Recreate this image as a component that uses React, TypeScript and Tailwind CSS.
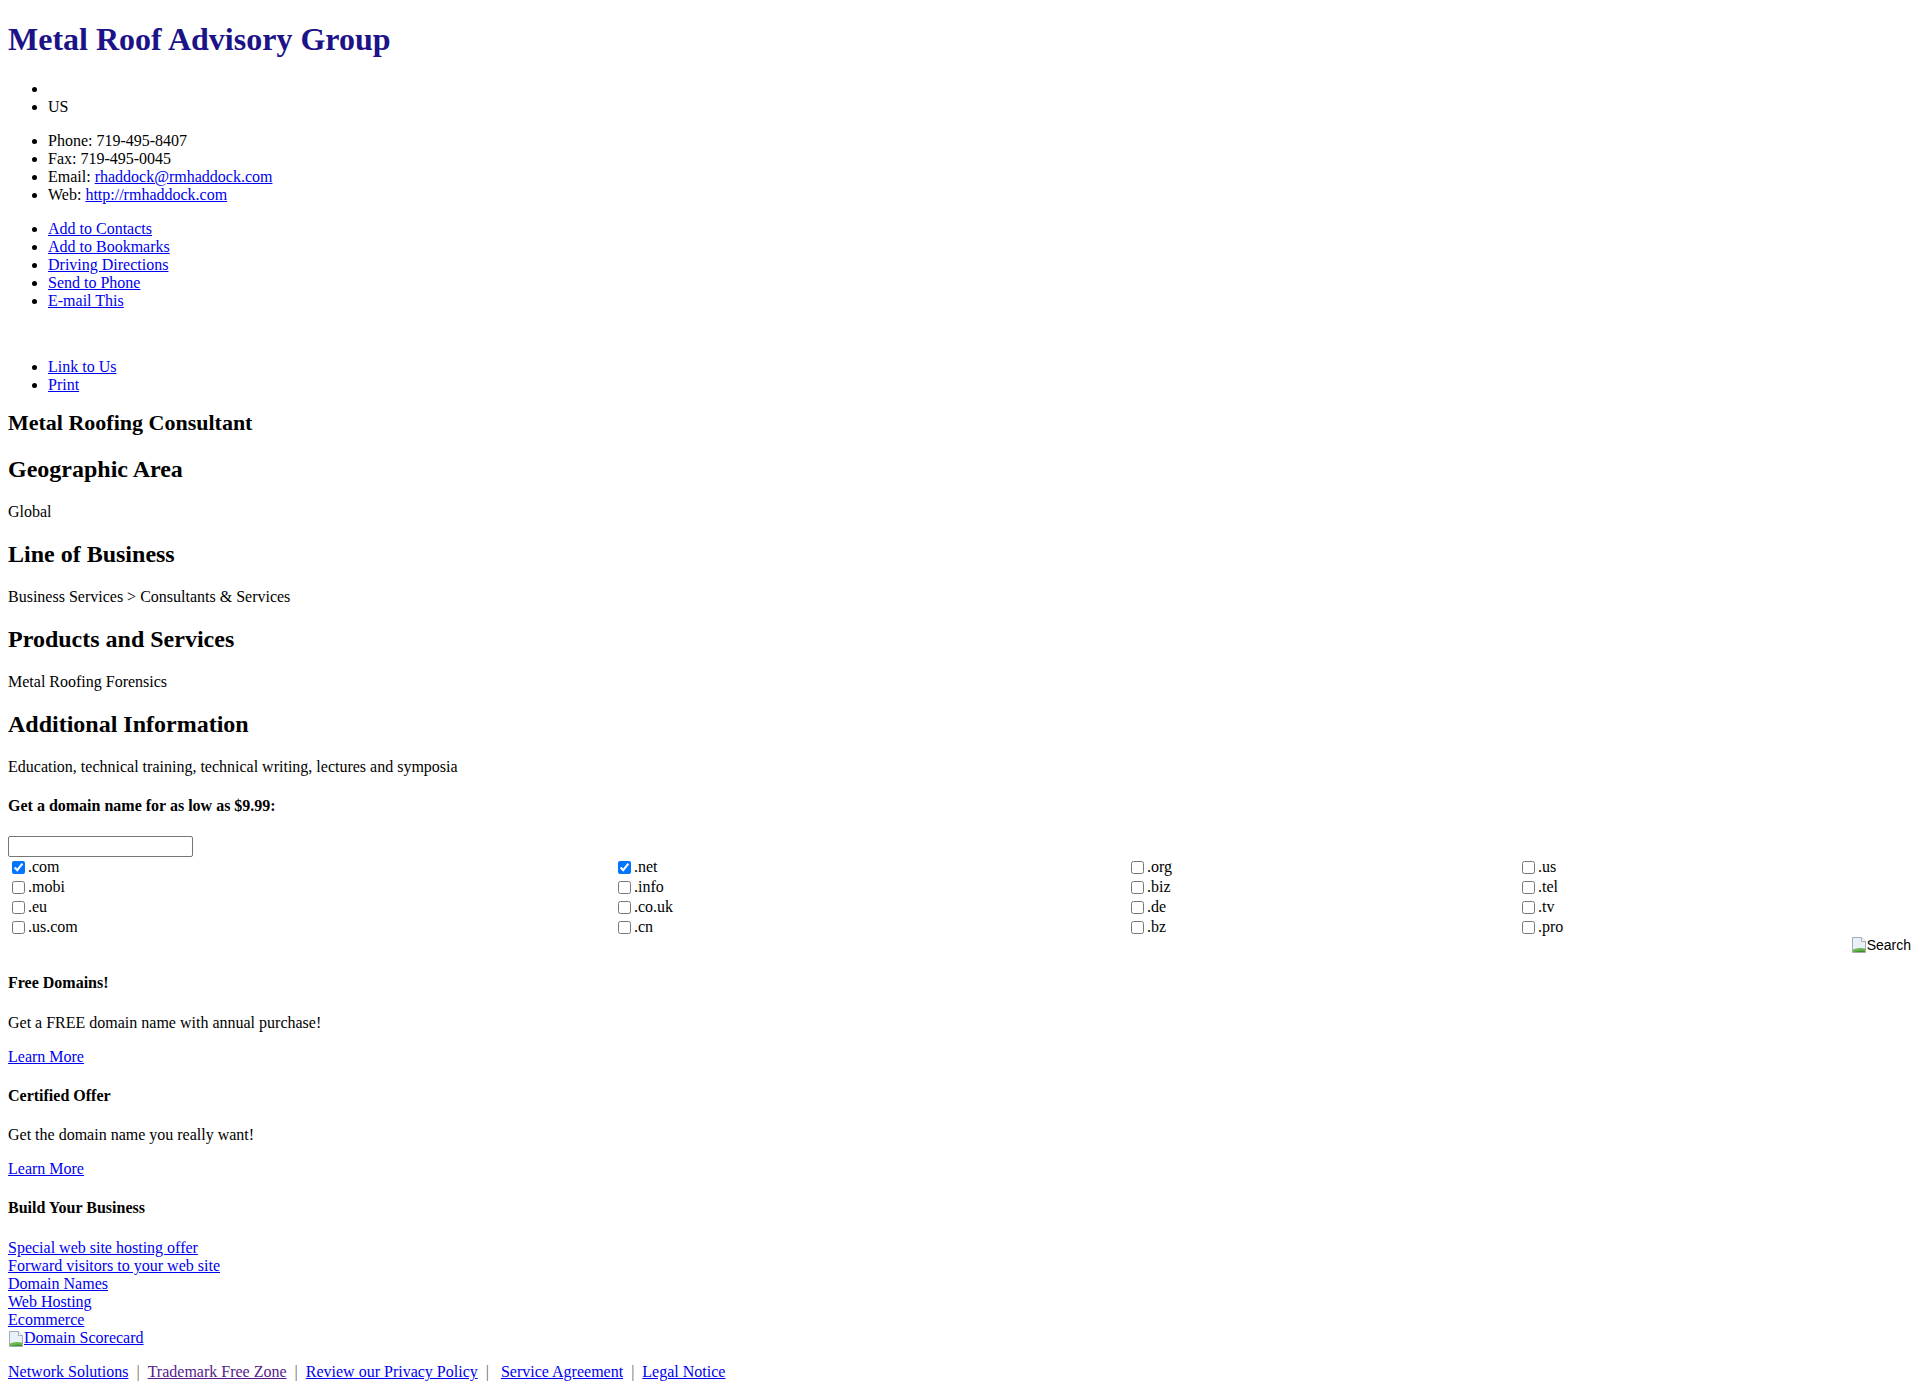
import React from 'react';

const contactLinks = ['Add to Contacts', 'Add to Bookmarks', 'Driving Directions', 'Send to Phone', 'E-mail This'];

const domainRows = [
  ['.com', '.net', '.org', '.us'],
  ['.mobi', '.info', '.biz', '.tel'],
  ['.eu', '.co.uk', '.de', '.tv'],
  ['.us.com', '.cn', '.bz', '.pro'],
];

const checkedByDefault = ['.com', '.net'];

const businessLinks = [
  'Special web site hosting offer',
  'Forward visitors to your web site',
  'Domain Names',
  'Web Hosting',
  'Ecommerce',
];

function BrokenImage() {
  return (
    <svg width="16" height="16" viewBox="0 0 16 16" className="inline-block shrink-0">
      <path d="M1.5 0.5 H10.5 L14.5 4.5 V15.5 H1.5 Z" fill="#e9f0f7" stroke="#a3acb5" />
      <path d="M10.5 0.5 V4.5 H14.5" fill="#ffffff" stroke="#a3acb5" />
      <path d="M2 15 V12.5 Q7 10 14 11.5 V15 Z" fill="#6cb84f" />
      <path d="M2 15 L10 13.5 L14 14 V15 Z" fill="#3f8f2c" />
    </svg>
  );
}

export default function App() {
  return (
    <div className="px-2 font-['Liberation_Serif',serif] text-[16px] leading-[normal] text-black bg-white min-h-[1396px]">
      <h1 className="pt-[21.44px] mb-[21.44px] text-[32px] font-bold text-[#1b1387]">
        Metal Roof Advisory Group
      </h1>

      <ul className="my-4 pl-10 list-disc">
        <li className="h-[1lh]"></li>
        <li>US</li>
      </ul>

      <ul className="my-4 pl-10 list-disc">
        <li>Phone: 719-495-8407</li>
        <li>Fax: 719-495-0045</li>
        <li>
          Email: <a href="#" className="text-[#0000ee] underline">rhaddock@rmhaddock.com</a>
        </li>
        <li>
          Web: <a href="#" className="text-[#0000ee] underline">http://rmhaddock.com</a>
        </li>
      </ul>

      <ul className="my-4 pl-10 list-disc">
        {contactLinks.map((label) => (
          <li key={label}>
            <a href="#" className="text-[#0000ee] underline">{label}</a>
          </li>
        ))}
      </ul>

      <ul className="mt-[48px] mb-4 pl-10 list-disc">
        <li>
          <a href="#" className="text-[#0000ee] underline">Link to Us</a>
        </li>
        <li>
          <a href="#" className="text-[#0000ee] underline">Print</a>
        </li>
      </ul>

      <h2 className="mt-[16.5px] mb-[18.3px] text-[22px] font-bold">Metal Roofing Consultant</h2>

      <h2 className="my-[19.92px] text-[24px] font-bold">Geographic Area</h2>
      <p className="my-4">Global</p>

      <h2 className="my-[19.92px] text-[24px] font-bold">Line of Business</h2>
      <p className="my-4">Business Services &gt; Consultants &amp; Services</p>

      <h2 className="my-[19.92px] text-[24px] font-bold">Products and Services</h2>
      <p className="my-4">Metal Roofing Forensics</p>

      <h2 className="my-[19.92px] text-[24px] font-bold">Additional Information</h2>
      <p className="my-4">Education, technical training, technical writing, lectures and symposia</p>

      <h4 className="my-[21.28px] font-bold">Get a domain name for as low as $9.99:</h4>

      <div>
        <input
          type="text"
          className="block w-[185px] h-[21px] border border-[#767676] rounded-[2px] px-[2px] font-['Liberation_Sans',sans-serif] text-[13px]"
        />
        <div className="grid grid-cols-[606px_513px_391px_1fr]">
          {domainRows.map((row) =>
            row.map((tld) => (
              <label key={tld} className="flex items-center h-5">
                <input
                  type="checkbox"
                  defaultChecked={checkedByDefault.includes(tld)}
                  className="w-[13px] h-[13px] mt-[3px] mr-[3px] mb-[3px] ml-[4px]"
                />
                <span>{tld}</span>
              </label>
            ))
          )}
        </div>
        <div className="flex justify-end items-center h-4 pr-[1px]">
          <span className="inline-flex items-center font-['Liberation_Sans',sans-serif] text-[14px] leading-none text-black">
            <BrokenImage />
            Search
          </span>
        </div>
      </div>

      <h4 className="my-[21.28px] font-bold">Free Domains!</h4>
      <p className="my-4">Get a FREE domain name with annual purchase!</p>
      <p className="my-4">
        <a href="#" className="text-[#0000ee] underline">Learn More</a>
      </p>

      <h4 className="my-[21.28px] font-bold">Certified Offer</h4>
      <p className="my-4">Get the domain name you really want!</p>
      <p className="my-4">
        <a href="#" className="text-[#0000ee] underline">Learn More</a>
      </p>

      <h4 className="my-[21.28px] font-bold">Build Your Business</h4>
      <div>
        {businessLinks.map((label) => (
          <div key={label}>
            <a href="#" className="text-[#0000ee] underline">{label}</a>
          </div>
        ))}
        <div>
          <a href="#" className="text-[#0000ee] underline">
            <BrokenImage />
            Domain Scorecard
          </a>
        </div>
      </div>

      <p className="mt-4 pb-4">
        <a href="#" className="text-[#0000ee] underline">Network Solutions</a>
        <span className="text-[#666666]">&nbsp;&nbsp;|&nbsp;&nbsp;</span>
        <a href="#" className="text-[#551a8b] underline">Trademark Free Zone</a>
        <span className="text-[#666666]">&nbsp;&nbsp;|&nbsp;&nbsp;</span>
        <a href="#" className="text-[#0000ee] underline">Review our Privacy Policy</a>
        <span className="text-[#666666]">&nbsp;&nbsp;|&nbsp;&nbsp;&nbsp;</span>
        <a href="#" className="text-[#0000ee] underline">Service Agreement</a>
        <span className="text-[#666666]">&nbsp;&nbsp;|&nbsp;&nbsp;</span>
        <a href="#" className="text-[#0000ee] underline">Legal Notice</a>
      </p>
    </div>
  );
}
